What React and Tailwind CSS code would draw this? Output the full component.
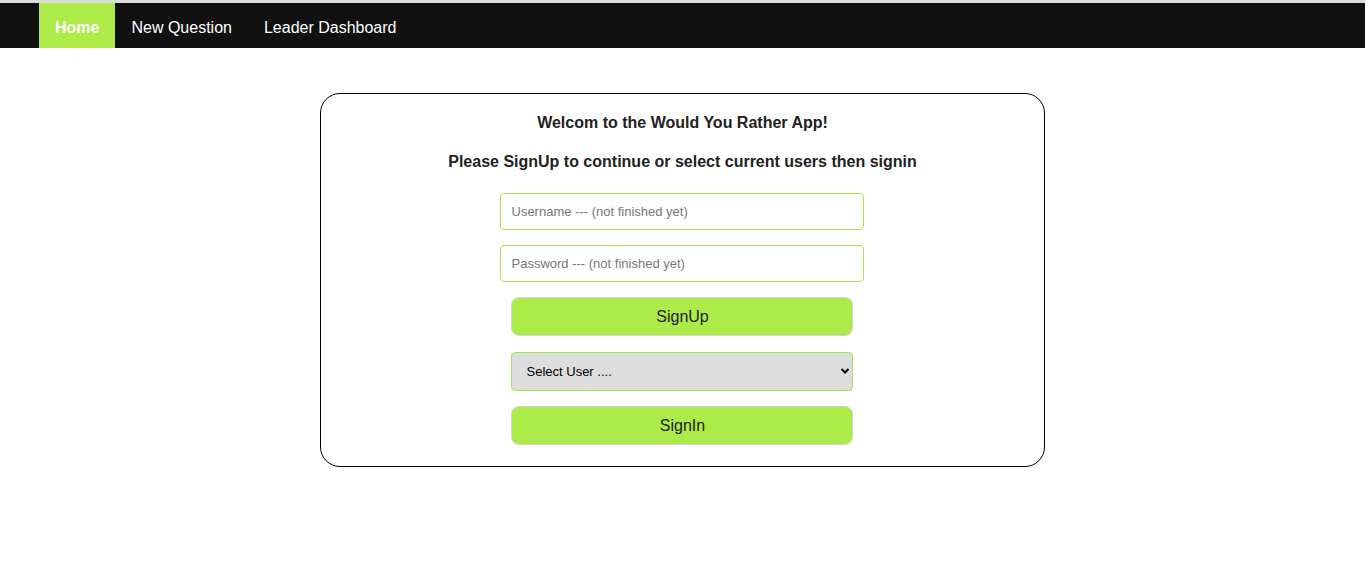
export default function App() {
  return (
    <div className="min-h-[561px] bg-white" style={{ fontFamily: '"Liberation Sans", Arial, sans-serif' }}>
      <nav className="flex h-[48px] border-t-[3px] border-[#dcdcdc] bg-[#111111] pl-[39px] text-[16px] text-white">
        <a className="flex items-center bg-[#adeb49] px-4 pt-[5px] font-bold">Home</a>
        <a className="flex items-center px-4 pt-[5px]">New Question</a>
        <a className="flex items-center px-4 pt-[5px]">Leader Dashboard</a>
      </nav>
      <div className="flex justify-center pt-[45px]">
        <div className="flex h-[374px] w-[725px] flex-col items-center rounded-[20px] border border-black text-[#222]">
          <h3 className="mt-[20px] text-[16px] font-bold leading-[18px]">Welcom to the Would You Rather App!</h3>
          <h3 className="mt-[21px] text-[16px] font-bold leading-[18px]">Please SignUp to continue or select current users then signin</h3>
          <input
            className="-ml-[2px] mt-[22px] h-[37px] w-[364px] rounded-[4px] border border-[#a9e34b] px-[11px] text-[13px] outline-none placeholder:text-[#777]"
            placeholder="Username --- (not finished yet)"
          />
          <input
            className="-ml-[2px] mt-[15px] h-[37px] w-[364px] rounded-[4px] border border-[#a9e34b] px-[11px] text-[13px] outline-none placeholder:text-[#777]"
            placeholder="Password --- (not finished yet)"
          />
          <button className="-ml-[2px] mt-[15px] h-[39px] w-[342px] rounded-[8px] border border-[#d4d4d4] bg-[#adeb49] pl-[2px] text-[16px] text-[#222]">
            SignUp
          </button>
          <div className="relative -ml-[2px] mt-[16px] h-[39px] w-[342px]">
            <select className="h-full w-full appearance-none rounded-[4px] border border-[#a9e34b] bg-[#dddddd] pl-[15px] text-[13px] text-black outline-none">
              <option>Select User ....</option>
            </select>
            <svg className="pointer-events-none absolute right-[3px] top-[15px]" width="10" height="8" viewBox="0 0 10 8">
              <path d="M1.5 2 L5 5.5 L8.5 2" stroke="black" strokeWidth="2" fill="none" />
            </svg>
          </div>
          <button className="-ml-[2px] mt-[15px] h-[39px] w-[342px] rounded-[8px] border border-[#d4d4d4] bg-[#adeb49] pl-[2px] text-[16px] text-[#222]">
            SignIn
          </button>
        </div>
      </div>
    </div>
  );
}
